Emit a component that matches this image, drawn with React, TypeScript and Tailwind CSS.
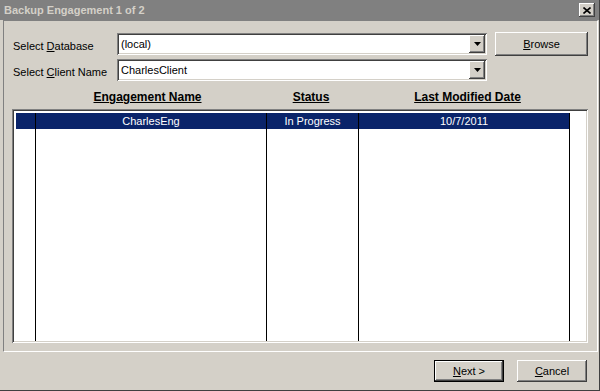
import React from "react"

const raised =
  "shadow-[inset_-1px_-1px_0_#404040,inset_1px_1px_0_#ffffff,inset_-2px_-2px_0_#808080,inset_2px_2px_0_#d4d0c8]"
const sunken =
  "shadow-[inset_1px_1px_0_#808080,inset_-1px_-1px_0_#ffffff,inset_2px_2px_0_#404040,inset_-2px_-2px_0_#d4d0c8]"

function Combo({ value }: { value: string }) {
  return (
    <div className={`h-[22px] w-[370px] bg-white ${sunken} flex items-center p-[2px]`}>
      <span className="flex-1 pl-[2px] leading-none">{value}</span>
      <div className={`w-[16px] h-[18px] bg-[#d4d0c8] ${raised} flex items-center justify-center`}>
        <svg width="7" height="4" viewBox="0 0 7 4">
          <path d="M0 0h7L3.5 4z" fill="#000" />
        </svg>
      </div>
    </div>
  )
}

function Button({ children, isDefault, className = "" }: { children: React.ReactNode; isDefault?: boolean; className?: string }) {
  return (
    <button
      className={`bg-[#d4d0c8] flex items-center justify-center text-black ${className} ${
        isDefault ? "border border-black" : ""
      }`}
    >
      <span className={`w-full h-full flex items-center justify-center ${raised}`}>{children}</span>
    </button>
  )
}

const cols = [
  { w: "w-[20px]", text: "" },
  { w: "w-[231px]", text: "CharlesEng" },
  { w: "w-[92px]", text: "In Progress" },
  { w: "w-[211px]", text: "10/7/2011" },
]

export default function App() {
  return (
    <div
      className="w-[600px] h-[391px] bg-[#d4d0c8] border-r border-b border-[#404040] flex flex-col text-[11px] text-black"
      style={{ fontFamily: '"Liberation Sans", Arial, sans-serif' }}
    >
      {/* caption */}
      <div className="h-[20px] bg-[#808080] flex items-center justify-between pl-[4px] pr-[4px]">
        <span className="font-bold text-[#d4d0c8] text-[11px]">Backup Engagement 1 of 2</span>
        <div className={`w-[16px] h-[14px] bg-[#d4d0c8] ${raised} flex items-center justify-center`}>
          <svg width="8" height="7" viewBox="0 0 8 7">
            <path d="M0.5 0.5L7.5 6.5M7.5 0.5L0.5 6.5" stroke="#000" strokeWidth="1.6" />
          </svg>
        </div>
      </div>

      {/* group panel */}
      <div className="ml-[3px] w-[595px] h-[332px] border-l border-t border-[#808080] border-r border-b border-r-white border-b-white pt-[11px] flex flex-col">
        <div className="flex items-start">
          <div className="w-[113px] pl-[9px] mt-[1px] flex flex-col gap-[4px]">
            <div className="h-[22px] flex items-center pt-[5px]">
              Select <span className="underline ml-[3px]">D</span>atabase
            </div>
            <div className="h-[22px] flex items-center pt-[5px]">
              Select <span className="underline ml-[3px]">C</span>lient Name
            </div>
          </div>
          <div className="mt-[1px] flex flex-col gap-[4px]">
            <Combo value="(local)" />
            <Combo value="CharlesClient" />
          </div>
          <Button className="ml-[8px] w-[93px] h-[24px]">
            <span>
              <span className="underline">B</span>rowse
            </span>
          </Button>
        </div>

        <div className="ml-[8px] pl-[20px] h-[28px] flex items-end pb-[3px] font-bold text-[12px]">
          <div className="w-[231px] text-center underline">Engagement Name</div>
          <div className="w-[92px] pl-[4px] text-center underline">Status</div>
          <div className="w-[211px] pl-[14px] text-center underline">Last Modified Date</div>
        </div>

        <div className={`ml-[8px] w-[576px] h-[234px] bg-white ${sunken} pt-[4px] pl-[4px] pb-[2px] flex`}>
          {cols.map((c, i) => (
            <div key={i} className={`${c.w} h-full border-r border-black flex flex-col`}>
              <div className="h-[16px] bg-[#0a246a] text-white flex items-center justify-center">{c.text}</div>
            </div>
          ))}
        </div>
      </div>

      {/* footer */}
      <div className="flex justify-end gap-[13px] pt-[8px] pr-[12px]">
        <Button isDefault className="w-[70px] h-[22px]">
          <span>
            <span className="underline">N</span>ext &gt;
          </span>
        </Button>
        <Button className="w-[70px] h-[22px]">
          <span>
            <span className="underline">C</span>ancel
          </span>
        </Button>
      </div>
    </div>
  )
}
